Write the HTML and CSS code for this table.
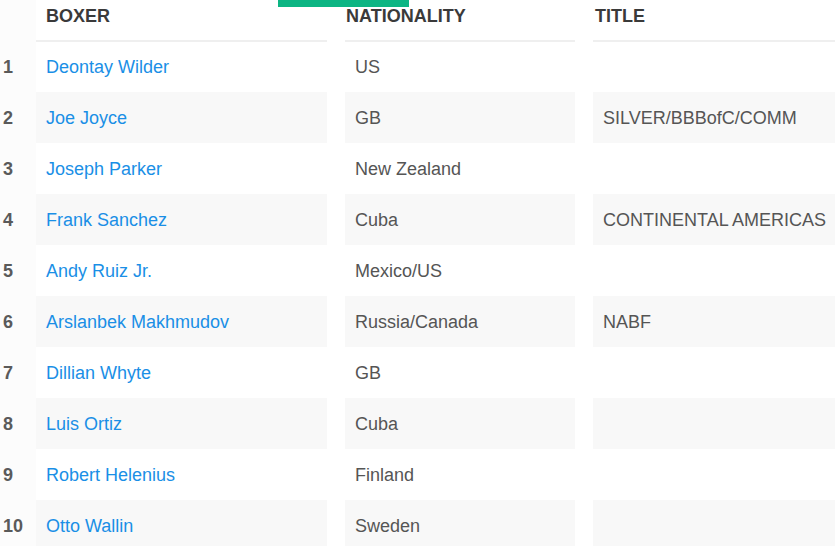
FILE: index.html
```html
<!DOCTYPE html>
<html>
<head>
<meta charset="utf-8">
<link rel="stylesheet" href="styles.css">
</head>
<body>
<div class="accent"></div>
<div class="table">
  <div class="row head">
    <div class="rank"></div>
    <div class="cell h boxer">BOXER</div>
    <div class="cell h nat">NATIONALITY</div>
    <div class="cell h title">TITLE</div>
  </div>
  <div class="row first"><div class="rank">1</div><div class="cell"><a href="#">Deontay Wilder</a></div><div class="cell">US</div><div class="cell"></div></div>
  <div class="row alt"><div class="rank">2</div><div class="cell"><a href="#">Joe Joyce</a></div><div class="cell">GB</div><div class="cell">SILVER/BBBofC/COMM</div></div>
  <div class="row"><div class="rank">3</div><div class="cell"><a href="#">Joseph Parker</a></div><div class="cell">New Zealand</div><div class="cell"></div></div>
  <div class="row alt"><div class="rank">4</div><div class="cell"><a href="#">Frank Sanchez</a></div><div class="cell">Cuba</div><div class="cell">CONTINENTAL AMERICAS</div></div>
  <div class="row"><div class="rank">5</div><div class="cell"><a href="#">Andy Ruiz Jr.</a></div><div class="cell">Mexico/US</div><div class="cell"></div></div>
  <div class="row alt"><div class="rank">6</div><div class="cell"><a href="#">Arslanbek Makhmudov</a></div><div class="cell">Russia/Canada</div><div class="cell">NABF</div></div>
  <div class="row"><div class="rank">7</div><div class="cell"><a href="#">Dillian Whyte</a></div><div class="cell">GB</div><div class="cell"></div></div>
  <div class="row alt"><div class="rank">8</div><div class="cell"><a href="#">Luis Ortiz</a></div><div class="cell">Cuba</div><div class="cell"></div></div>
  <div class="row"><div class="rank">9</div><div class="cell"><a href="#">Robert Helenius</a></div><div class="cell">Finland</div><div class="cell"></div></div>
  <div class="row alt"><div class="rank">10</div><div class="cell"><a href="#">Otto Wallin</a></div><div class="cell">Sweden</div><div class="cell"></div></div>
</div>
</body>
</html>
```
FILE: styles.css
```css
html, body {
  margin: 0;
  padding: 0;
  background: #ffffff;
  overflow: hidden;
}
body {
  font-family: "Liberation Sans", Arial, sans-serif;
  font-size: 18px;
  color: #555555;
  position: relative;
}
.accent {
  position: absolute;
  left: 278px;
  top: 0;
  width: 131px;
  height: 7px;
  background: #0cb583;
}
.table {
  width: 850px;
}
.row {
  display: grid;
  grid-template-columns: 18px 291px 230px 257px;
  column-gap: 18px;
  height: 51px;
}
.row.head {
  height: 42px;
}
.row.first {
  height: 50px;
}
.rank {
  background: #fcfcfc;
  font-weight: bold;
  color: #5a5a5a;
  padding-left: 3px;
  padding-top: 2px;
  white-space: nowrap;
  display: flex;
  align-items: center;
  width: 36px;
  box-sizing: border-box;
}
.cell {
  display: flex;
  align-items: center;
  padding-left: 10px;
  padding-top: 2px;
  white-space: nowrap;
}
.row.first .cell,
.row.first .rank {
  padding-top: 0;
}
.alt .cell {
  background: #f8f8f8;
}
.cell a {
  color: #1a8fe6;
  text-decoration: none;
}
.cell.h {
  align-items: flex-start;
  padding-top: 5px;
  font-weight: bold;
  color: #3a3a3a;
  border-bottom: 2px solid #efefef;
  box-sizing: border-box;
  line-height: 22px;
}
.cell.h.nat {
  padding-left: 1px;
}
.cell.h.title {
  padding-left: 2px;
}
```
